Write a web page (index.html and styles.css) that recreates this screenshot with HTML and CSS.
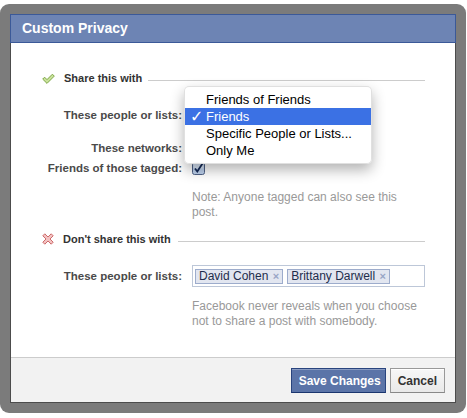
FILE: index.html
```html
<!DOCTYPE html>
<html lang="en">
<head>
    <meta charset="UTF-8">
    <title>Custom Privacy</title>
    <link rel="stylesheet" href="styles.css">
</head>
<body>
    <div class="frame">
        <div class="dialog">
            <div class="dialog-header">Custom Privacy</div>

            <div class="dialog-body">
                <div class="section-title">
                    <svg class="section-icon" width="13" height="11" viewBox="0 0 13 11">
                        <path d="M0.7 6.1 L2.6 4.2 L5 6.6 L10.4 1.2 L12.3 3.1 L5 10.4 Z" fill="#c9e29a" stroke="#7ea647" stroke-width="1"/>
                    </svg>
                    <span>Share this with</span>
                    <span class="rule"></span>
                </div>

                <div class="field field-people">
                    <label>These people or lists:</label>
                    <div class="control">
                        <ul class="menu">
                            <li>Friends of Friends</li>
                            <li class="selected"><span class="tick">✓</span>Friends</li>
                            <li>Specific People or Lists...</li>
                            <li>Only Me</li>
                        </ul>
                    </div>
                </div>

                <div class="field field-networks">
                    <label>These networks:</label>
                    <div class="control"></div>
                </div>

                <div class="field field-tagged">
                    <label>Friends of those tagged:</label>
                    <div class="control">
                        <svg class="checkbox" width="13" height="13" viewBox="0 0 13 13">
                            <rect x="0.5" y="0.5" width="12" height="12" rx="2" fill="#bcd0ec" stroke="#4f6287"/>
                            <rect x="1.5" y="1.5" width="10" height="5" rx="1" fill="#d9e6f7"/>
                            <path d="M3 6.5 L5.3 9.5 L10.5 1.5" fill="none" stroke="#142a57" stroke-width="1.8"/>
                        </svg>
                    </div>
                </div>

                <p class="hint hint-note">Note: Anyone tagged can also see this post.</p>

                <div class="section-title section-deny">
                    <svg class="section-icon" width="12" height="12" viewBox="0 0 12 12">
                        <path d="M0.8 2.8 L2.8 0.8 L6 4 L9.2 0.8 L11.2 2.8 L8 6 L11.2 9.2 L9.2 11.2 L6 8 L2.8 11.2 L0.8 9.2 L4 6 Z" fill="#f3c2c2" stroke="#cc6b6b" stroke-width="1"/>
                    </svg>
                    <span>Don't share this with</span>
                    <span class="rule"></span>
                </div>

                <div class="field field-deny">
                    <label>These people or lists:</label>
                    <div class="control token-box">
                        <span class="token">David Cohen <span class="token-x">×</span></span>
                        <span class="token">Brittany Darwell <span class="token-x">×</span></span>
                    </div>
                </div>

                <p class="hint hint-help">Facebook never reveals when you choose not to share a post with somebody.</p>
            </div>

            <div class="dialog-footer">
                <button class="btn btn-primary">Save Changes</button>
                <button class="btn">Cancel</button>
            </div>
        </div>
    </div>
</body>
</html>
```

FILE: styles.css
```css
body {
    margin: 0;
    background-color: #fff;
    font-family: "Liberation Sans", Arial, sans-serif;
    color: #333;
}

.frame {
    width: 466px;
    margin-top: 4px;
    padding: 10px;
    box-sizing: border-box;
    background-color: #7b7b7b;
    border-radius: 9px;
}

.dialog {
    background-color: #fff;
    border: 1px solid #4c4c4c;
}

.dialog-header {
    margin: -1px -1px 0;
    padding: 5px 11px;
    line-height: 17px;
    background-color: #6d84b4;
    border: 1px solid #3b5998;
    color: #fff;
    font-size: 14px;
    font-weight: bold;
}

.dialog-body {
    height: 314px;
    box-sizing: border-box;
    padding: 28px 30px 0 31px;
}

/* 見出し行（アイコン＋文字＋線） */
.section-title {
    display: flex;
    align-items: center;
    height: 14px;
    font-size: 11px;
    font-weight: bold;
    color: #333;
}

.section-icon {
    flex: none;
    margin-right: 9px;
}

.section-title .rule {
    flex: 1;
    margin-left: 6px;
    margin-top: 4px;
    border-top: 1px solid #ccc;
}

.section-deny {
    margin-top: 12px;
}

.section-deny .rule {
    margin-left: 7px;
}

.field {
    display: flex;
    align-items: center;
}

.field label {
    width: 140px;
    margin-right: 10px;
    text-align: right;
    font-size: 11.5px;
    font-weight: bold;
    color: #4a4a4a;
}

.control {
    position: relative;
    align-self: stretch;
    display: flex;
    align-items: center;
    width: 233px;
}

.field-people {
    margin-top: 19px;
    height: 22px;
}

.field-networks {
    margin-top: 11px;
    height: 22px;
}

.field-tagged {
    margin-top: 2px;
    height: 14px;
}

.checkbox {
    display: block;
}

.hint {
    margin: 15px 0 0 150px;
    font-size: 12px;
    line-height: 15px;
    color: #999;
}

.hint-help {
    margin-top: 12px;
}

.field-deny {
    margin-top: 19px;
    height: 22px;
}

/* 開いているプルダウン */
.menu {
    position: absolute;
    top: -18px;
    left: -8px;
    width: 188px;
    margin: 0;
    padding: 4px 0;
    list-style: none;
    background-color: rgba(255, 255, 255, 0.97);
    border: 1px solid rgba(0, 0, 0, 0.12);
    border-radius: 5px;
    box-shadow: 0 6px 14px rgba(0, 0, 0, 0.3);
    box-sizing: border-box;
    font-size: 13px;
    color: #000;
    z-index: 10;
}

.menu li {
    position: relative;
    height: 17px;
    line-height: 17px;
    padding-left: 21px;
}

.menu li.selected {
    background-color: #3b71e4;
    color: #fff;
}

.menu .tick {
    position: absolute;
    left: 5px;
    top: 0;
    font-family: "DejaVu Sans", sans-serif;
    font-size: 16px;
    line-height: 17px;
    font-weight: bold;
}

.token-box {
    gap: 4px;
    height: 22px;
    padding: 0 2px;
    box-sizing: border-box;
    border: 1px solid #bdc7d8;
}

.token {
    height: 15px;
    padding: 0 3px;
    box-sizing: border-box;
    line-height: 13px;
    font-size: 12px;
    color: #1e2d4c;
    background-color: #e2e6f0;
    border: 1px solid #9daccc;
}

.token-x {
    margin-left: 1px;
    font-size: 11px;
    font-weight: bold;
    color: #98a5c6;
}

.dialog-footer {
    display: flex;
    justify-content: flex-end;
    gap: 4px;
    height: 45px;
    box-sizing: border-box;
    padding: 10px 10px 0 0;
    background-color: #f2f2f2;
    border-top: 1px solid #ccc;
}

.btn {
    height: 25px;
    padding: 0 7px;
    white-space: nowrap;
    font-family: "Liberation Sans", Arial, sans-serif;
    font-size: 12px;
    font-weight: bold;
    color: #333;
    background: linear-gradient(#f7f7f7, #e9e9e9);
    border: 1px solid #999;
    border-bottom-color: #888;
    box-shadow: inset 0 1px 0 #fff;
}

.btn-primary {
    width: 95px;
    color: #fff;
    background: #5b74a8;
    border-color: #29447e;
    border-bottom-color: #1a356e;
    box-shadow: inset 0 1px 0 #8a9cc2;
}
```
